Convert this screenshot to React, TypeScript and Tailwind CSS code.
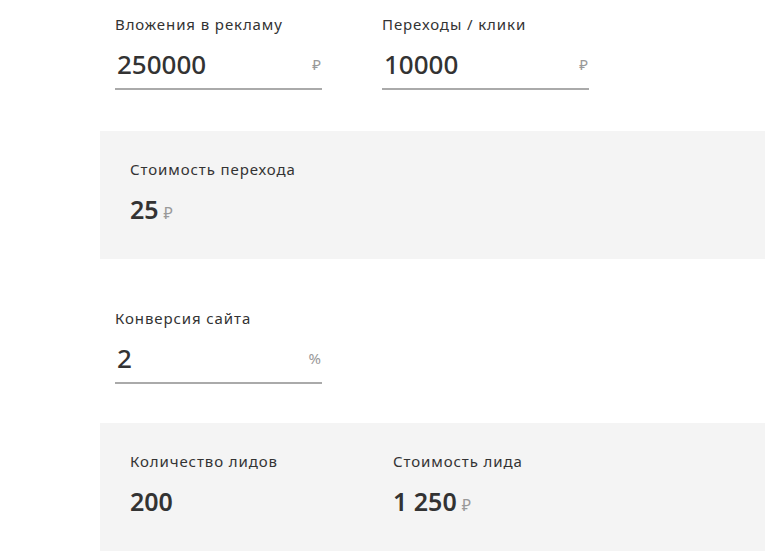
import React from 'react';

const font = { fontFamily: '"Noto Sans", "Open Sans", sans-serif' };

function Field({ label, value, unit }: { label: string; value: string; unit: string }) {
    return (
        <div className="w-[207px]">
            <div className="text-[15px] leading-[20px] tracking-[0.06em] text-[#333]">{label}</div>
            <div className="mt-[15px] flex items-center justify-between border-b-2 border-[#aaa] pb-[9px]">
                <span className="pl-[2px] text-[26px] leading-[30px] font-medium text-[#333]">{value}</span>
                <span className="pr-[1px] text-[15px] text-[#999]">{unit}</span>
            </div>
        </div>
    );
}

function Result({ label, value, unit }: { label: string; value: string; unit?: string }) {
    return (
        <div className="w-[263px]">
            <div className="text-[15px] leading-[20px] tracking-[0.06em] text-[#333]">{label}</div>
            <div className="mt-[15px] flex items-baseline text-[#333]">
                <span className="text-[25px] leading-[30px] font-semibold">{value}</span>
                {unit && <span className="ml-[5px] text-[16px] text-[#999]">{unit}</span>}
            </div>
        </div>
    );
}

export default function App() {
    return (
        <div className="min-h-[557px] bg-white pl-[100px] pt-[14px]" style={font}>
            <div className="flex gap-[60px] px-[15px]">
                <Field label="Вложения в рекламу" value="250000" unit="₽" />
                <Field label="Переходы / клики" value="10000" unit="₽" />
            </div>

            <div className="mt-[41px] h-[128px] bg-[#f4f4f4] px-[30px] pt-[28px]">
                <Result label="Стоимость перехода" value="25" unit="₽" />
            </div>

            <div className="mt-[49px] px-[15px]">
                <Field label="Конверсия сайта" value="2" unit="%" />
            </div>

            <div className="mt-[39px] flex h-[128px] bg-[#f4f4f4] px-[30px] pt-[28px]">
                <Result label="Количество лидов" value="200" />
                <Result label="Стоимость лида" value="1 250" unit="₽" />
            </div>
        </div>
    );
}
